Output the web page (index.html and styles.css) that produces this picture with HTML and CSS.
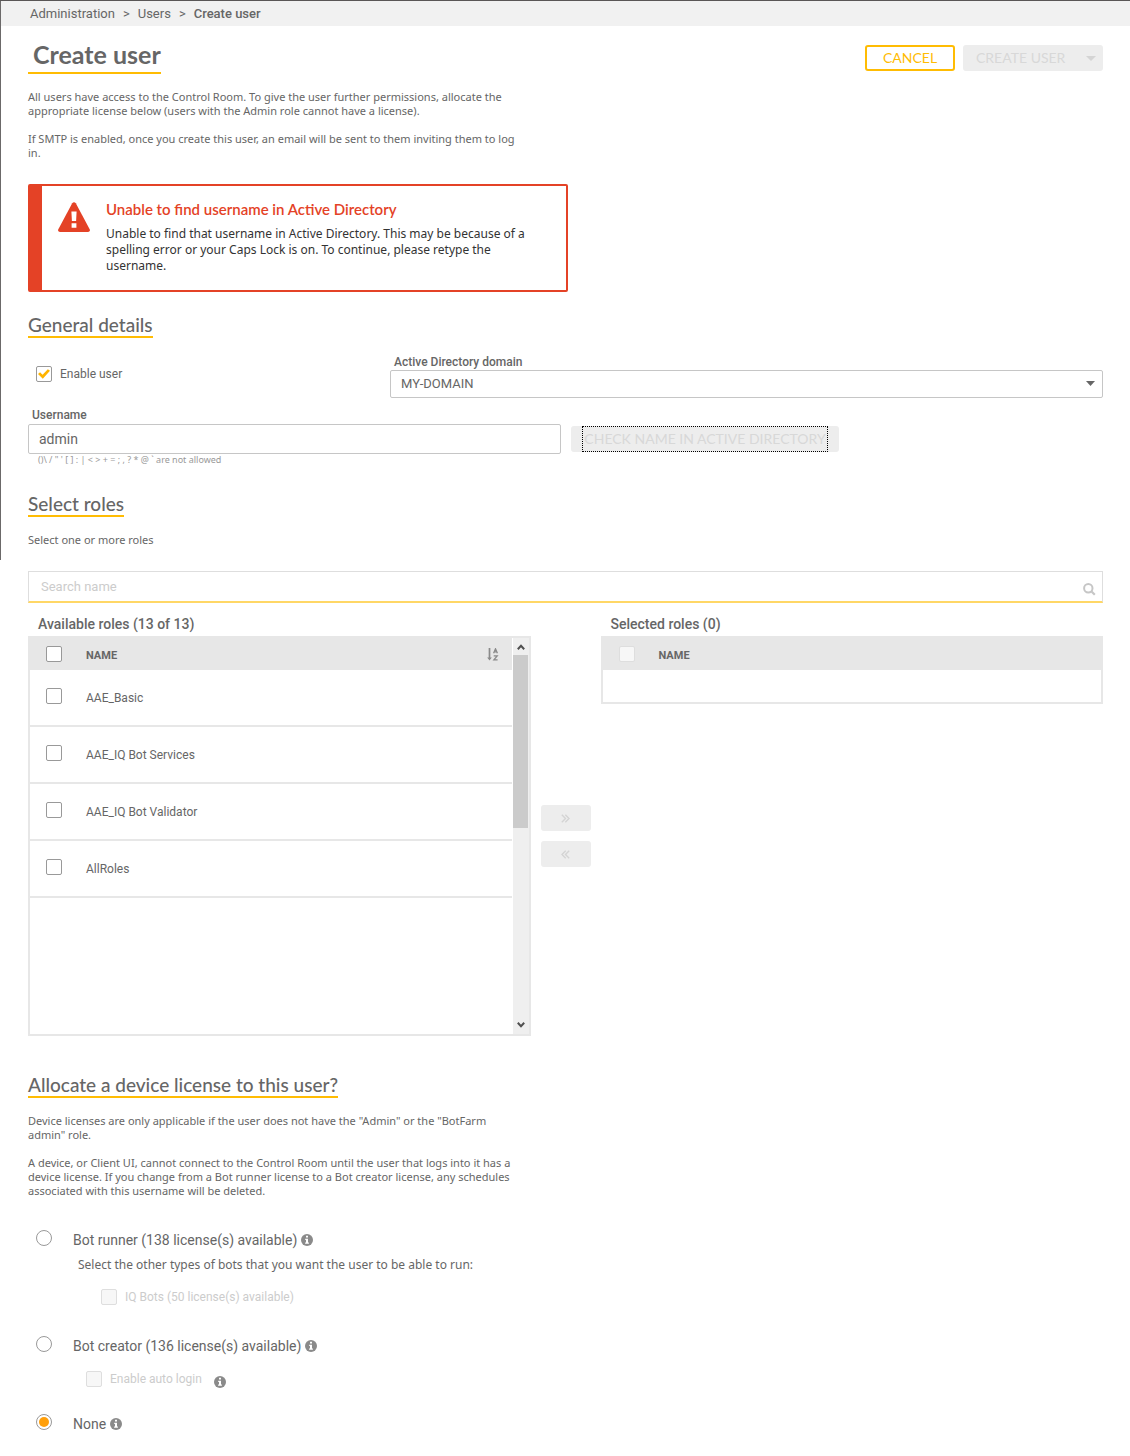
FILE: index.html
```html
<!DOCTYPE html>
<html lang="en">
<head>
<meta charset="utf-8">
<meta name="viewport" content="width=device-width, initial-scale=1">
<title>Create user</title>
<link rel="stylesheet" href="styles.css">
</head>
<body>
<svg class="sprite" aria-hidden="true">
  <symbol id="info" viewBox="0 0 12 12">
    <circle cx="6" cy="6" r="6" fill="#8a8a8a"/>
    <path d="M5 1.8h2v1.7H5zM4.2 4.7H7v3.7h.9v1.3H4.1V8.4H5V6h-.8z" fill="#fff"/>
  </symbol>
</svg>
<nav class="breadcrumb" aria-label="Breadcrumb">
  <a href="#">Administration</a><span>&gt;</span><a href="#">Users</a><span>&gt;</span><a class="current" href="#" aria-current="page">Create user</a>
</nav>
<main class="content">
  <header class="page-head">
    <h1>Create user</h1>
    <div class="actions">
      <button class="btn btn-outline" type="button">CANCEL</button>
      <button class="btn btn-create" type="button" disabled>CREATE USER
        <svg width="10" height="5" viewBox="0 0 10 5" aria-hidden="true"><path d="M0 0h10L5 5z" fill="#d4d4d4"/></svg>
      </button>
    </div>
  </header>

  <div class="copy">
    <p>All users have access to the Control Room. To give the user further permissions, allocate the<br>appropriate license below (users with the Admin role cannot have a license).</p>
    <p>If SMTP is enabled, once you create this user, an email will be sent to them inviting them to log<br>in.</p>
  </div>

  <div class="alert" role="alert">
    <svg width="32" height="30" viewBox="0 0 32 30" aria-hidden="true">
      <path d="M14.2 1.3Q16-.9 17.8 1.3L31.8 27.6Q32.200 30 30 30H2Q-.2 30 .2 27.600Z" fill="#e44226"/>
      <path d="M13.400 9.500h5.200l-.5 9.500h-4.200zM13.600 21.300h4.800v4.400h-4.800z" fill="#fff"/>
    </svg>
    <div>
      <h2 class="alert-title">Unable to find username in Active Directory</h2>
      <p>Unable to find that username in Active Directory. This may be because of a<br>spelling error or your Caps Lock is on. To continue, please retype the<br>username.</p>
    </div>
  </div>

  <h2 class="section">General details</h2>
  <div class="details">
    <label class="enable"><input class="check" type="checkbox" checked>Enable user</label>
    <div class="field domain">
      <label for="domain">Active Directory domain</label>
      <div class="select-wrap">
        <select id="domain"><option>MY-DOMAIN</option></select>
        <svg width="9" height="5" viewBox="0 0 9 5" aria-hidden="true"><path d="M0 0h9L4.500 5z" fill="#666"/></svg>
      </div>
    </div>
  </div>
  <div class="field">
    <label for="username">Username</label>
    <div class="username-row">
      <input class="text" id="username" type="text" value="admin" aria-describedby="hint">
      <button class="btn btn-check" type="button" disabled><span>CHECK NAME IN ACTIVE DIRECTORY</span></button>
    </div>
    <p class="hint" id="hint">()\ / " ' [ ] : | &lt; &gt; + = ; , ? * @ ` are not allowed</p>
  </div>

  <h2 class="section roles-title">Select roles</h2>
  <div class="copy"><p>Select one or more roles</p></div>
  <div class="search">
    <input type="search" placeholder="Search name" aria-label="Search name">
    <svg width="13" height="13" viewBox="0 0 13 13" aria-hidden="true"><circle cx="5.300" cy="5.300" r="4.200" fill="none" stroke="#c6c6c6" stroke-width="2"/><path d="M8.500 8.500l3.300 3.300" stroke="#c6c6c6" stroke-width="2.200"/></svg>
  </div>

  <div class="picker">
    <section class="side">
      <h3>Available roles (13 of 13)</h3>
      <div class="list available">
        <table>
          <thead><tr>
            <th class="tick"><input class="check" type="checkbox" aria-label="Select all available roles"></th>
            <th class="name">NAME</th>
            <th class="sort"><svg width="12" height="13" viewBox="0 0 12 13" fill="none" stroke="#8a8a8a" aria-hidden="true"><path d="M2.500 0v11" stroke-width="1.700"/><path d="M.2 9.400h4.600L2.500 12.500z" fill="#8a8a8a" stroke="none"/><path d="M6.600 5.300L8.500.8l1.900 4.500M7.200 3.900h2.600M6.700 7.800h3.500L6.900 11.800h3.700" stroke-width="1.300"/></svg></th>
          </tr></thead>
          <tbody>
            <tr><td class="tick"><input class="check" type="checkbox" id="r1"></td><td colspan="2"><label for="r1">AAE_Basic</label></td></tr>
            <tr><td class="tick"><input class="check" type="checkbox" id="r2"></td><td colspan="2"><label for="r2">AAE_IQ Bot Services</label></td></tr>
            <tr><td class="tick"><input class="check" type="checkbox" id="r3"></td><td colspan="2"><label for="r3">AAE_IQ Bot Validator</label></td></tr>
            <tr><td class="tick"><input class="check" type="checkbox" id="r4"></td><td colspan="2"><label for="r4">AllRoles</label></td></tr>
          </tbody>
        </table>
        <div class="scrollbar" aria-hidden="true">
          <svg width="8" height="6" viewBox="0 0 8 6"><path d="M.8 5.200L4 1.800l3.200 3.400" fill="none" stroke="#505050" stroke-width="2"/></svg>
          <div class="thumb"></div>
          <svg width="8" height="6" viewBox="0 0 8 6"><path d="M.8.800L4 4.200 7.200.8" fill="none" stroke="#505050" stroke-width="2"/></svg>
        </div>
      </div>
    </section>
    <div class="movers">
      <button class="btn" type="button" aria-label="Add roles" disabled><svg width="9" height="9" viewBox="0 0 9 9" fill="none" stroke="#d4d4d4" stroke-width="1.400"><path d="M.8.800l3.700 3.700L.8 8.200M4.300.8L8 4.500 4.300 8.200"/></svg></button>
      <button class="btn" type="button" aria-label="Remove roles" disabled><svg width="9" height="9" viewBox="0 0 9 9" fill="none" stroke="#d4d4d4" stroke-width="1.400"><path d="M8.200.8L4.500 4.500l3.700 3.700M4.700.8L1 4.500l3.700 3.700"/></svg></button>
    </div>
    <section class="side">
      <h3>Selected roles (0)</h3>
      <div class="list">
        <table>
          <thead><tr>
            <th class="tick"><input class="check" type="checkbox" disabled aria-label="Select all selected roles"></th>
            <th class="name">NAME</th>
          </tr></thead>
          <tbody><tr class="empty"><td colspan="2"></td></tr></tbody>
        </table>
      </div>
    </section>
  </div>

  <h2 class="section">Allocate a device license to this user?</h2>
  <div class="copy">
    <p>Device licenses are only applicable if the user does not have the "Admin" or the "BotFarm<br>admin" role.</p>
    <p>A device, or Client UI, cannot connect to the Control Room until the user that logs into it has a<br>device license. If you change from a Bot runner license to a Bot creator license, any schedules<br>associated with this username will be deleted.</p>
  </div>

  <div class="licenses">
    <div class="license">
      <input class="radio" type="radio" name="license" id="runner">
      <div>
        <label class="license-name" for="runner">Bot runner (138 license(s) available)<svg class="info"><use href="#info"/></svg></label>
        <p class="sub">Select the other types of bots that you want the user to be able to run:</p>
        <label class="option iq"><input class="check" type="checkbox" disabled>IQ Bots (50 license(s) available)</label>
      </div>
    </div>
    <div class="license">
      <input class="radio" type="radio" name="license" id="creator">
      <div>
        <label class="license-name" for="creator">Bot creator (136 license(s) available)<svg class="info"><use href="#info"/></svg></label>
        <label class="option login"><input class="check" type="checkbox" disabled>Enable auto login<svg class="info"><use href="#info"/></svg></label>
      </div>
    </div>
    <div class="license">
      <input class="radio" type="radio" name="license" id="none" checked>
      <label class="license-name" for="none">None<svg class="info"><use href="#info"/></svg></label>
    </div>
  </div>
</main>
</body>
</html>
```
FILE: styles.css
```css
* { box-sizing: border-box; }

body {
  margin: 0;
  border-top: 1px solid #595656;
  background: linear-gradient(#6b6969, #6b6969) 0 0 / 1px 560px no-repeat #fff;
  color: #666;
  font: 12px/16px Roboto, "Open Sans", sans-serif;
}

h1, h2, h3, p { margin: 0; }
a { color: inherit; text-decoration: none; }
button, input, select { font: inherit; color: inherit; margin: 0; }
svg { flex: none; display: block; }
.sprite { display: none; }

.breadcrumb {
  display: flex;
  gap: 8px;
  margin-left: 1px;
  padding: 0 29px;
  background: #f1f1f1;
  font-size: 13px;
  line-height: 25px;
}
.current { font-weight: 500; }

.content { padding: 15px 27px 24px 28px; }

.page-head {
  display: flex;
  justify-content: space-between;
  align-items: flex-start;
  margin-bottom: 16px;
}
h1 {
  padding: 0 0 4px 5px;
  border-bottom: 2px solid #ffbc03;
  font-family: Lato, sans-serif;
  font-size: 25px;
  line-height: 27px;
}
.actions { display: flex; gap: 8px; padding-top: 4px; }

.btn {
  display: flex;
  justify-content: center;
  align-items: center;
  height: 26px;
  padding: 0;
  border: 0;
  border-radius: 3px;
  background: #ededed;
  color: #d8d8d8;
  font-family: Lato, sans-serif;
  font-size: 14px;
  line-height: 26px;
}
.btn-outline {
  width: 90px;
  border: 2px solid #ffbc03;
  background: #fff;
  color: #ffbc03;
}
.btn-create {
  justify-content: space-between;
  width: 140px;
  padding: 0 7px 0 13px;
}

.copy {
  display: grid;
  gap: 14px;
  font-family: "Noto Sans", sans-serif;
  font-size: 11px;
  line-height: 14px;
}

.alert {
  display: flex;
  gap: 16px;
  max-width: 540px;
  min-height: 108px;
  margin: 24px 0 22px;
  padding: 16px;
  border: 2px solid #e44226;
  border-left-width: 14px;
  border-radius: 2px;
  color: #333;
  font-family: "Noto Sans", sans-serif;
}
.alert-title {
  margin-bottom: 10px;
  color: #e44226;
  font-family: Lato, sans-serif;
  font-size: 15px;
  font-weight: 600;
  line-height: 14px;
}

.section {
  width: fit-content;
  margin-bottom: 16px;
  border-bottom: 2px solid #ffbc03;
  font-family: Lato, sans-serif;
  font-size: 19px;
  font-weight: 500;
  line-height: 22px;
}

.field label {
  display: block;
  padding-left: 4px;
  font-weight: 500;
  line-height: 16px;
}
.details { display: flex; margin-bottom: 9px; }
.enable {
  display: flex;
  align-items: center;
  gap: 8px;
  flex: 0 0 362px;
  height: 40px;
  padding-left: 8px;
}
.domain { flex: 1; }
.select-wrap { position: relative; }
.select-wrap svg { position: absolute; right: 8px; top: 11px; }
select {
  display: block;
  appearance: none;
  width: 100%;
  height: 28px;
  padding: 0 24px 0 10px;
  border: 1px solid #c6c6c6;
  border-radius: 2px;
  background: #fff;
  font-size: 13px;
}

.username-row { display: flex; align-items: center; gap: 10px; margin-top: 1px; }
.text {
  flex: 0 1 533px;
  height: 30px;
  padding: 0 10px;
  border: 1px solid #c6c6c6;
  border-radius: 2px;
  font-size: 14px;
}
.btn-check { width: 268px; }
.btn-check span { width: 246px; outline: 1px dotted #000; outline-offset: -1px; }
.hint {
  padding-left: 10px;
  color: #999;
  font-family: "Noto Sans", sans-serif;
  font-size: 9px;
  line-height: 12px;
}

.roles-title { margin-top: 27px; }

.search { position: relative; margin: 24px 0 13px; }
.search input {
  display: block;
  width: 100%;
  height: 32px;
  padding: 0 32px 0 12px;
  border: 1px solid #dedede;
  border-bottom: 2px solid #ffd766;
  border-radius: 0;
  outline: 0;
  font-size: 13px;
  appearance: none;
}
.search input::placeholder { color: #ccc; opacity: 1; }
.search svg { position: absolute; right: 7px; top: 12px; }

.picker { display: flex; gap: 10px; margin-bottom: 38px; }
.side { flex: 1; }
h3 {
  padding-left: 10px;
  font-size: 14px;
  font-weight: 500;
  line-height: 16px;
  margin-bottom: 4px;
}
.list { display: flex; align-items: flex-start; border: 2px solid #e7e7e7; }
.available { height: 400px; }
table { flex: 1; border-spacing: 0; table-layout: fixed; width: 100%; }
th, td { padding: 0; text-align: left; vertical-align: middle; }
th { height: 32px; background: #e7e7e7; font-size: 11px; font-weight: 700; }
td { height: 57px; border-bottom: 2px solid #e7e7e7; }
.name { padding-top: 3px; }
.tick { width: 56px; padding-left: 16px; }
td.tick { padding-bottom: 4px; }
.sort { width: 25px; }
.empty td { height: 32px; border: 0; }

.scrollbar {
  display: flex;
  flex-direction: column;
  align-items: center;
  align-self: stretch;
  width: 16px;
  margin-left: 1px;
  padding: 6px 0;
  background: #efefef;
}
.thumb { width: 15px; height: 173px; margin: 5px 1px auto 0; background: #cbcbcb; }

.movers {
  display: flex;
  flex-direction: column;
  gap: 10px;
  padding-top: 189px;
}
.movers .btn { width: 50px; }

.check, .radio {
  display: grid;
  place-content: center;
  flex: none;
  appearance: none;
  width: 16px;
  height: 16px;
  border: 1px solid #999;
  border-radius: 2px;
  background: #fff;
}
.check:checked::before {
  content: "";
  width: 12px;
  height: 10px;
  background: #ffb400;
  clip-path: polygon(0 50%, 17% 33%, 38% 57%, 82% 2%, 100% 18%, 40% 98%);
}
.check:disabled { border-color: #dedede; background: #f7f7f7; }
.radio { border-radius: 50%; }
.radio:checked::before {
  content: "";
  width: 10px;
  height: 10px;
  border-radius: 50%;
  background: #ff9f0a;
}

.licenses { margin-top: 32px; padding-left: 8px; }
.license { display: flex; gap: 21px; margin-bottom: 31px; }
.license:last-child { margin: 0; }
.license-name {
  display: flex;
  align-items: center;
  gap: 4px;
  padding-top: 2px;
  font-size: 14px;
  line-height: 16px;
}
.info { width: 12px; height: 12px; }
.sub { margin-top: 9px; padding-left: 5px; font-family: "Noto Sans", sans-serif; }
.option { display: flex; align-items: center; gap: 8px; color: #ccc; }
.iq { margin-top: 16px; padding-left: 28px; }
.login { height: 16px; margin-top: 17px; padding-left: 13px; }
.login .info { margin: 6px 0 0 4px; }
.license:nth-child(2) { margin-bottom: 27px; }
```
